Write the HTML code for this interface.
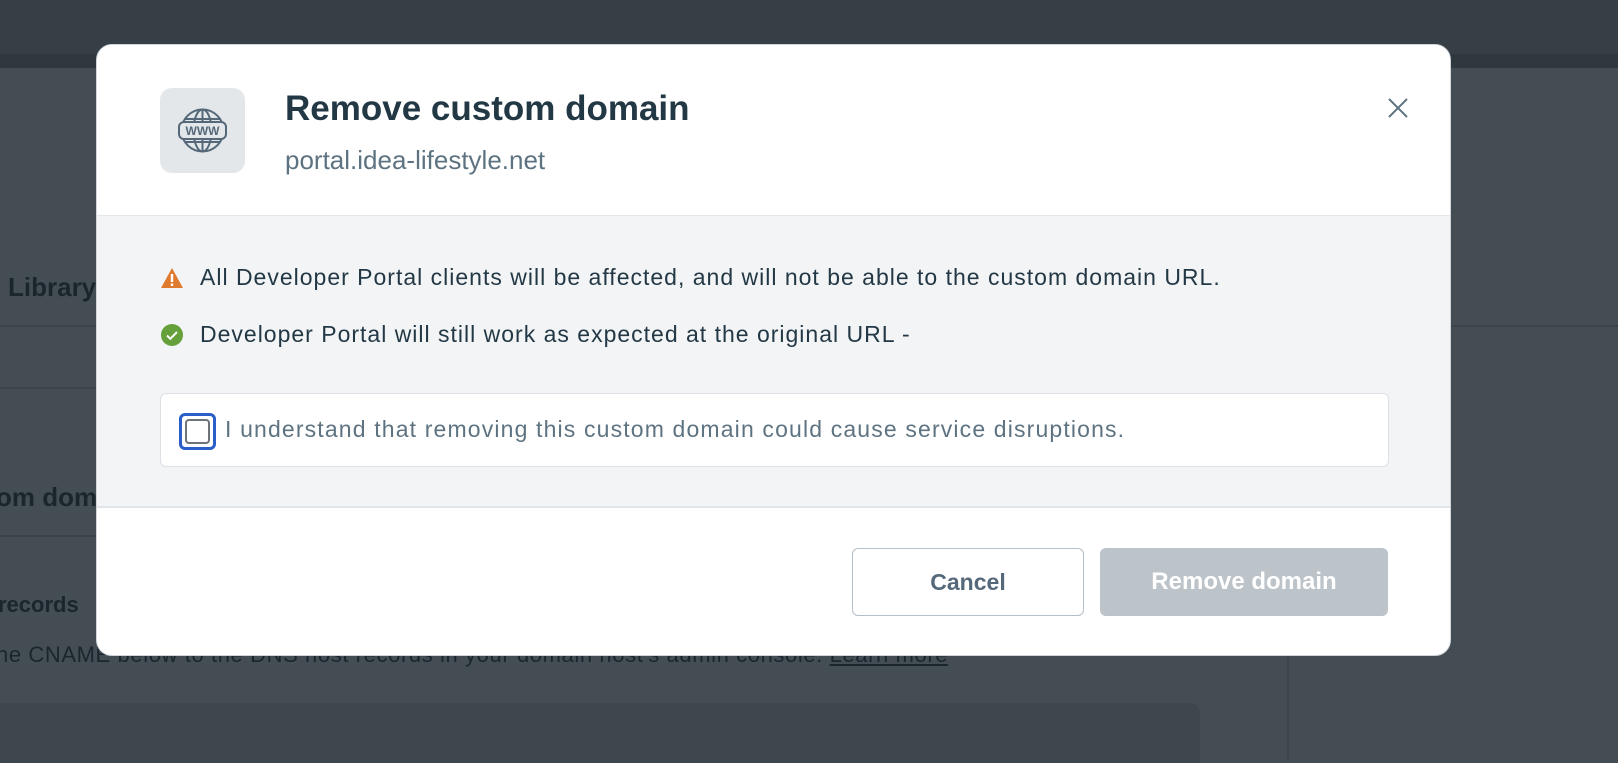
<!DOCTYPE html>
<html><head><meta charset="utf-8"><style>
*{box-sizing:border-box;margin:0;padding:0}
body{width:1618px;height:760px;overflow:hidden;background:#454d54;font-family:"Liberation Sans",sans-serif;position:relative}
.top{position:absolute;left:0;top:0;width:1618px;height:54px;background:#373f46}
.top2{position:absolute;left:0;top:54px;width:1618px;height:14px;background:#2f383f}
.bgt{position:absolute;color:#1a252c;font-weight:bold}
.line{position:absolute;height:2px;background:#3c444b}
.modal{position:absolute;left:96px;top:44px;width:1355px;height:612px;background:#fff;border-radius:16px;overflow:hidden;border:1px solid #cfd5db}
.hdr{position:absolute;left:0;top:0;width:100%;height:171px;background:#fff;border-bottom:1px solid #e3e6ea;box-shadow:0 2px 8px rgba(0,0,0,.06)}
.iconbox{position:absolute;left:63px;top:43px;width:85px;height:85px;background:#e3e7ea;border-radius:12px}
.title{position:absolute;left:188px;top:44px;font-size:35px;font-weight:bold;color:#233845}
.sub{position:absolute;left:188px;top:100px;font-size:26px;color:#5e7381}
.close{position:absolute;left:1290px;top:52px}
.body{position:absolute;left:0;top:171px;width:100%;height:292px;background:#f3f4f6;border-bottom:2px solid #e1e4e8}
.row{position:absolute;left:63px;font-size:23px;letter-spacing:1px;color:#233845;display:flex;align-items:center;white-space:nowrap}
.row svg{margin-right:16px}
.chk{position:absolute;left:63px;top:177px;width:1229px;height:74px;background:#fff;border:1px solid #dde1e5;border-radius:6px}
.cb{position:absolute;left:18px;top:19px;width:37px;height:37px;border:3px solid #2b5ec8;border-radius:6px}
.cb div{position:absolute;left:3px;top:3px;width:25px;height:25px;border:2px solid #6d7378;border-radius:4px}
.chk span{position:absolute;left:64px;top:22px;font-size:23px;letter-spacing:1.15px;color:#5e7381;white-space:nowrap}
.btn{position:absolute;top:503px;height:68px;border-radius:6px;font-size:23px;font-weight:bold;display:flex;align-items:center;justify-content:center}
</style></head><body>
<div class="top"></div><div class="top2"></div>
<div class="bgt" style="left:8px;top:272px;font-size:26px">Library</div>
<div class="line" style="left:0;top:325px;width:1618px"></div>
<div class="line" style="left:0;top:387px;width:96px"></div>
<div class="bgt" style="left:-4px;top:482px;font-size:26px">om domain</div>
<div class="line" style="left:0;top:535px;width:96px"></div>
<div class="bgt" style="left:-2px;top:592px;font-size:22px">records</div>
<div style="position:absolute;left:-4px;top:642px;font-size:22px;letter-spacing:0.6px;color:#1a252c;white-space:nowrap">he CNAME below to the DNS host records in your domain host's admin console. <u>Learn more</u></div>
<div style="position:absolute;left:1287px;top:68px;width:2px;height:692px;background:#3e464d"></div>
<div style="position:absolute;left:0;top:703px;width:1200px;height:60px;background:#3e474e;border-radius:0 10px 0 0"></div>
<div class="modal">
 <div class="hdr">
  <div class="iconbox"><svg width="85" height="85" viewBox="0 0 85 85" fill="none" stroke="#55687a" stroke-width="2">
   <circle cx="42.5" cy="42.5" r="21"/><ellipse cx="42.5" cy="42.5" rx="9" ry="21"/><line x1="42.5" y1="21.5" x2="42.5" y2="63.5"/>
   <line x1="25" y1="31" x2="60" y2="31"/><line x1="25" y1="54" x2="60" y2="54"/>
   <rect x="19" y="34" width="47" height="17" rx="5" fill="#e3e7ea"/>
   <text x="42.5" y="47" font-size="12" font-family="Liberation Sans" fill="#55687a" stroke="none" text-anchor="middle" font-weight="bold">WWW</text>
  </svg></div>
  <div class="title">Remove custom domain</div>
  <div class="sub">portal.idea-lifestyle.net</div>
  <svg class="close" width="22" height="22" viewBox="0 0 22 22" stroke="#5e7381" stroke-width="2"><path d="M2 2L20 20M20 2L2 20"/></svg>
 </div>
 <div class="body">
  <div class="row" style="top:48px"><svg width="24" height="22" viewBox="0 0 24 22"><path d="M12 1L23 21H1Z" fill="#e07a2e"/><rect x="10.8" y="7" width="2.4" height="8" fill="#fff"/><rect x="10.8" y="16.5" width="2.4" height="2.4" fill="#fff"/></svg>All Developer Portal clients will be affected, and will not be able to the custom domain URL.</div>
  <div class="row" style="top:105px"><svg width="24" height="24" viewBox="0 0 24 24"><circle cx="12" cy="12" r="11" fill="#65a03a"/><path d="M7 12.5l3.3 3.3L17 9" stroke="#fff" stroke-width="2" fill="none"/></svg>Developer Portal will still work as expected at the original URL -</div>
  <div class="chk"><div class="cb"><div></div></div><span>I understand that removing this custom domain could cause service disruptions.</span></div>
 </div>
 <div class="btn" style="left:755px;width:232px;background:#fff;border:1px solid #b6bec6;color:#56697a">Cancel</div>
 <div class="btn" style="left:1003px;width:288px;background:#bcc3c9;color:#fff;font-size:24px">Remove domain</div>
</div>
</body></html>
